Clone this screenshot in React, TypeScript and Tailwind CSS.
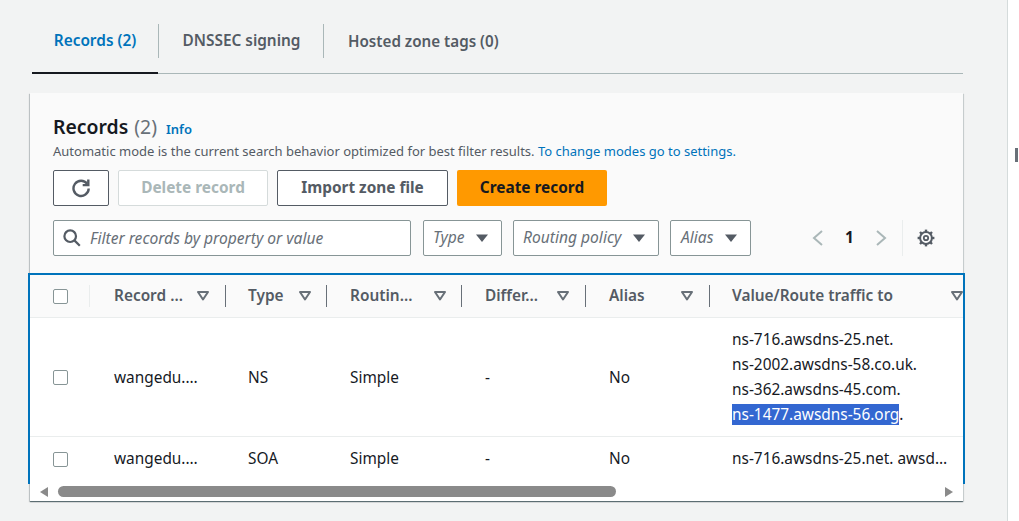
import React from "react";

const Caret = () => (
  <svg width="16" height="16" viewBox="0 0 16 16" className="shrink-0">
    <path d="M2 4.5h12L8 12z" fill="#545b64" />
  </svg>
);

const Sort = () => (
  <svg width="12" height="10" viewBox="0 0 12 10" className="shrink-0">
    <path d="M1 1h10L6 8.5z" fill="none" stroke="#687078" strokeWidth="2" strokeLinejoin="round" />
  </svg>
);

const Check = () => <span className="block w-[15px] h-[15px] rounded-[2px] border border-[#879596] bg-white" />;

const cols = [
  { w: "w-[136px]", pl: "pl-[24px]" },
  { w: "w-[101px]", pl: "pl-[22px]" },
  { w: "w-[135px]", pl: "pl-[23px]" },
  { w: "w-[124px]", pl: "pl-[23px]" },
  { w: "w-[124px]", pl: "pl-[23px]" },
  { w: "w-[253px]", pl: "pl-[22px]" },
];

const Head = ({ i, label, sep = true, sortPr = "pr-[16px]" }: { i: number; label: string; sep?: boolean; sortPr?: string }) => (
  <div className={`${cols[i].w} ${cols[i].pl} ${sortPr} shrink-0 h-[22px] flex items-center justify-between ${sep ? "border-r border-[#687078]" : ""}`}>
    <span className="font-semibold text-[#545b64] whitespace-nowrap">{label}</span>
    <Sort />
  </div>
);

const Cell = ({ i, nudge = false, children }: { i: number; nudge?: boolean; children: React.ReactNode }) => (
  <div className={`${cols[i].w} ${cols[i].pl} ${nudge ? "pt-[2px]" : ""} shrink-0 text-[#16191f]`}>{children}</div>
);

const FilterBtn = ({ label, w, pl, gap }: { label: string; w: string; pl: string; gap: string }) => (
  <div className={`${w} ${pl} ${gap} h-[36px] bg-white border border-[#879596] rounded-[2px] flex items-center shrink-0`}>
    <span className="italic text-[15.6px] text-[#687078] whitespace-nowrap pb-[3px]">{label}</span>
    <Caret />
  </div>
);

const gearTeeth = ["M9 .6v3", "M9 14.4v3", "M.6 9h3", "M14.4 9h3", "M3 3l2.1 2.1", "M12.9 12.9L15 15", "M3 15l2.1-2.1", "M12.9 5.1L15 3"];

export default function App() {
  return (
    <div className="w-[1019px] h-[521px] overflow-hidden flex bg-[#f2f3f3] text-[15.4px] font-['Noto_Sans','Open_Sans',sans-serif] leading-[22px]">
      <div className="w-[1007px] shrink-0 pl-[30px] pr-[44px]">
        <div className="ml-[2px] h-[74px] pt-[24px] flex items-start border-b border-[#aab7b8] mt-0">
          <div className="w-[126px] h-[50px] -mb-px border-b-2 border-[#16191f] flex justify-center">
            <span className="h-[34px] flex items-center font-semibold text-[#0073bb] whitespace-nowrap">Records (2)</span>
          </div>
          <div className="w-[166px] h-[34px] pl-[1px] border-l border-r border-[#aab7b8] flex items-center justify-center font-semibold text-[#545b64] whitespace-nowrap">DNSSEC signing</div>
          <div className="pl-[24px] h-[34px] flex items-center font-semibold text-[15.2px] text-[#545b64] whitespace-nowrap">Hosted zone tags (0)</div>
        </div>

        <div className="mt-[19px] h-[408px] bg-[#fafafa] shadow-[0_1px_1px_0_rgba(0,28,36,0.5),1px_1px_1px_0_rgba(0,28,36,0.1),-1px_1px_1px_0_rgba(0,28,36,0.15)] flex flex-col">
          <div className="h-[180px] px-[23px] pt-[23px] shrink-0">
            <div className="flex items-baseline h-[26px]">
              <span className="text-[19.4px] font-semibold text-[#16191f]">Records</span>
              <span className="text-[19.4px] text-[#687078] ml-[6px]">(2)</span>
              <span className="text-[13px] font-semibold text-[#0073bb] ml-[9px]">Info</span>
            </div>
            <div className="text-[13px] leading-[18px] text-[#545b64] whitespace-nowrap">
              Automatic mode is the current search behavior optimized for best filter results. <span className="text-[#0073bb]">To change modes go to settings.</span>
            </div>
            <div className="flex gap-[9px] mt-[10px]">
              <div className="w-[56px] h-[36px] bg-white border border-[#545b64] rounded-[2px] flex items-center justify-center">
                <svg width="20" height="20" viewBox="0 0 20 20" fill="none" stroke="#545b64" strokeWidth="2.4">
                  <path d="M16.2 5.8A7.6 7.6 0 1 0 17.7 10.5" />
                  <path d="M17.3 1.5v5.6h-5.6" />
                </svg>
              </div>
              <div className="w-[150px] h-[36px] bg-white border border-[#d5dbdb] rounded-[2px] flex items-center justify-center font-bold text-[#aab7b8]">Delete record</div>
              <div className="w-[171px] h-[36px] bg-white border border-[#545b64] rounded-[2px] flex items-center justify-center font-bold text-[#545b64]">Import zone file</div>
              <div className="w-[150px] h-[36px] bg-[#ff9900] rounded-[2px] flex items-center justify-center font-bold text-[#16191f]">Create record</div>
            </div>
            <div className="flex items-center mt-[14px]">
              <div className="w-[358px] h-[36px] bg-white border border-[#879596] rounded-[2px] flex items-center pl-[9px] gap-[9px] shrink-0">
                <svg width="18" height="18" viewBox="0 0 18 18" fill="none" stroke="#545b64" strokeWidth="2.2">
                  <circle cx="7.2" cy="7.2" r="5.8" />
                  <path d="M11.4 11.4l5.4 5.4" />
                </svg>
                <span className="italic text-[15.6px] text-[#687078] whitespace-nowrap pb-[1px]">Filter records by property or value</span>
              </div>
              <div className="ml-[12px]"><FilterBtn label="Type" w="w-[79px]" pl="pl-[9px]" gap="gap-[9px]" /></div>
              <div className="ml-[11px]"><FilterBtn label="Routing policy" w="w-[146px]" pl="pl-[9px]" gap="gap-[10px]" /></div>
              <div className="ml-[11px]"><FilterBtn label="Alias" w="w-[81px]" pl="pl-[10px]" gap="gap-[10px]" /></div>
              <div className="ml-[59px] flex items-center">
                <svg width="16" height="18" viewBox="0 0 16 18" fill="none" stroke="#aab7b8" strokeWidth="2"><path d="M12 2L4 9l8 7" /></svg>
                <span className="w-[47px] text-center font-bold text-[#16191f]">1</span>
                <svg width="16" height="18" viewBox="0 0 16 18" fill="none" stroke="#aab7b8" strokeWidth="2"><path d="M4 2l8 7-8 7" /></svg>
              </div>
              <div className="ml-[13px] h-[36px] border-l border-[#eaeded] pl-[14px] flex items-center">
                <svg width="18" height="18" viewBox="0 0 18 18" fill="none" stroke="#545b64">
                  <circle cx="9" cy="9" r="5.9" strokeWidth="2" />
                  <circle cx="9" cy="9" r="2.2" strokeWidth="1.8" />
                  {gearTeeth.map((d) => (
                    <path key={d} d={d} strokeWidth="2.4" />
                  ))}
                </svg>
              </div>
            </div>
          </div>

          <div className="-ml-[2px] -mr-[2px] h-[211px] border-2 border-b-0 border-[#0073bb] overflow-hidden shrink-0">
            <div className="h-[43px] bg-[#fafafa] border-b border-[#eaeded] flex items-center">
              <div className="w-[60px] shrink-0 pl-[23px] flex items-center h-[22px] border-r border-[#eaeded]"><Check /></div>
              <Head i={0} label="Record ..." />
              <Head i={1} label="Type" sortPr="pr-[15px]" />
              <Head i={2} label="Routin..." sortPr="pr-[15px]" />
              <Head i={3} label="Differ..." />
              <Head i={4} label="Alias" sortPr="pr-[16px]" />
              <Head i={5} label="Value/Route traffic to" sep={false} sortPr="pr-0" />
            </div>
            <div className="h-[119px] bg-white border-b border-[#eaeded] flex items-center">
              <div className="w-[60px] shrink-0 pl-[23px]"><Check /></div>
              <Cell i={0} nudge>wangedu.…</Cell>
              <Cell i={1} nudge>NS</Cell>
              <Cell i={2} nudge>Simple</Cell>
              <Cell i={3} nudge>-</Cell>
              <Cell i={4} nudge>No</Cell>
              <Cell i={5}>
                <div className="leading-[25px]">
                  <div>ns-716.awsdns-25.net.</div>
                  <div>ns-2002.awsdns-58.co.uk.</div>
                  <div>ns-362.awsdns-45.com.</div>
                  <div><span className="bg-[#3367d1] text-white">ns-1477.awsdns-56.org</span>.</div>
                </div>
              </Cell>
            </div>
            <div className="h-[47px] bg-white flex items-center pb-[3px]">
              <div className="w-[60px] shrink-0 pl-[23px] pt-[1px]"><Check /></div>
              <Cell i={0}>wangedu.…</Cell>
              <Cell i={1}>SOA</Cell>
              <Cell i={2}>Simple</Cell>
              <Cell i={3}>-</Cell>
              <Cell i={4}>No</Cell>
              <Cell i={5}><div className="whitespace-nowrap">ns-716.awsdns-25.net. awsd…</div></Cell>
            </div>
          </div>

          <div className="flex-1 bg-white flex items-center pl-[9px] pr-[9px] pb-[2px]">
            <svg width="10" height="12" viewBox="0 0 10 12" className="shrink-0"><path d="M9 1v10L1 6z" fill="#8a8a8a" /></svg>
            <div className="ml-[9px] w-[558px] h-[11px] rounded-full bg-[#8a8a8a]" />
            <svg width="10" height="12" viewBox="0 0 10 12" className="shrink-0 ml-auto"><path d="M1 1v10l8-5z" fill="#8a8a8a" /></svg>
          </div>
        </div>
      </div>
      <div className="flex-1 bg-white border-l border-[#d5dbdb] pt-[148px] pl-[7px]">
        <div className="w-[3px] h-[14px] bg-[#687078]" />
      </div>
    </div>
  );
}
